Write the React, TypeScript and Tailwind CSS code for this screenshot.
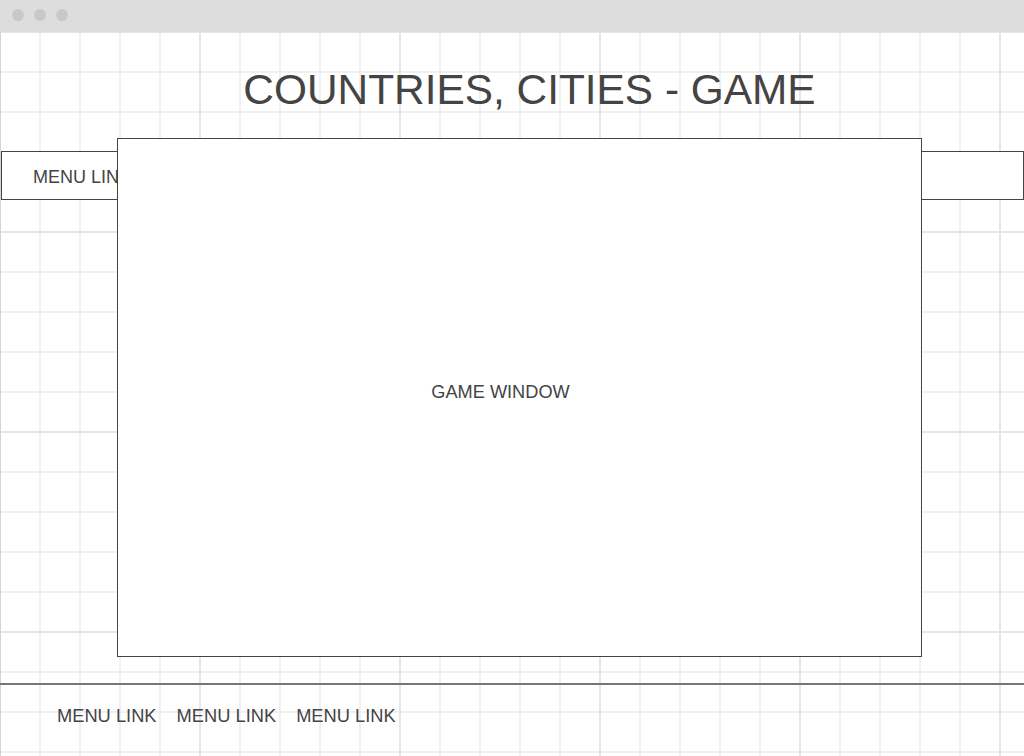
import React from "react";

const links = ["MENU LINK", "MENU LINK", "MENU LINK"];

export default function App() {
  return (
    <div className="w-[1024px] h-[756px] overflow-hidden bg-white font-['Liberation_Sans',Arial,sans-serif] text-[#444]">
      {/* Browser chrome */}
      <div className="h-8 bg-[#dddddd] flex items-center gap-[10px] pl-3 pb-[2px]">
        <span className="w-3 h-3 rounded-full bg-[#c8c8c8]" />
        <span className="w-3 h-3 rounded-full bg-[#c8c8c8]" />
        <span className="w-3 h-3 rounded-full bg-[#c8c8c8]" />
      </div>

      {/* Page canvas with grid */}
      <div className="relative h-[724px] flex flex-col bg-white shadow-[inset_1px_0_0_#d4d4d4] [background-image:linear-gradient(to_right,#e6e6e6_1px,transparent_1px,transparent_199px,#e6e6e6_199px),linear-gradient(to_bottom,#e6e6e6_1px,transparent_1px,transparent_199px,#e6e6e6_199px),linear-gradient(to_right,#f0f0f0_1px,transparent_1px,transparent_39px,#f0f0f0_39px),linear-gradient(to_bottom,#f0f0f0_1px,transparent_1px,transparent_39px,#f0f0f0_39px)] [background-size:200px_200px,200px_200px,40px_40px,40px_40px]">
        <h1 className="mt-[34px] pl-[35px] text-center text-[42.4px] leading-[48px] font-normal">
          COUNTRIES, CITIES - GAME
        </h1>

        {/* Top menu bar */}
        <div className="mt-[37px] ml-px h-[49px] border border-[#444] bg-white flex items-start pt-[15px] pl-[31px]">
          <span className="text-[18px] leading-5">MENU LINK</span>
        </div>

        {/* Footer */}
        <div className="mt-auto h-[73px] border-t-2 border-[#777] flex items-start gap-5 pt-[21px] pl-[57px]">
          {links.map((l, i) => (
            <span key={i} className="text-[18.3px] leading-5">
              {l}
            </span>
          ))}
        </div>

        {/* Game window overlays the menu bar */}
        <div className="absolute left-[117px] top-[106px] w-[805px] h-[519px] border border-[#444] bg-white flex items-center justify-center pr-[38px] pb-[11px]">
          <span className="text-[18.2px] leading-5">GAME WINDOW</span>
        </div>
      </div>
    </div>
  );
}
